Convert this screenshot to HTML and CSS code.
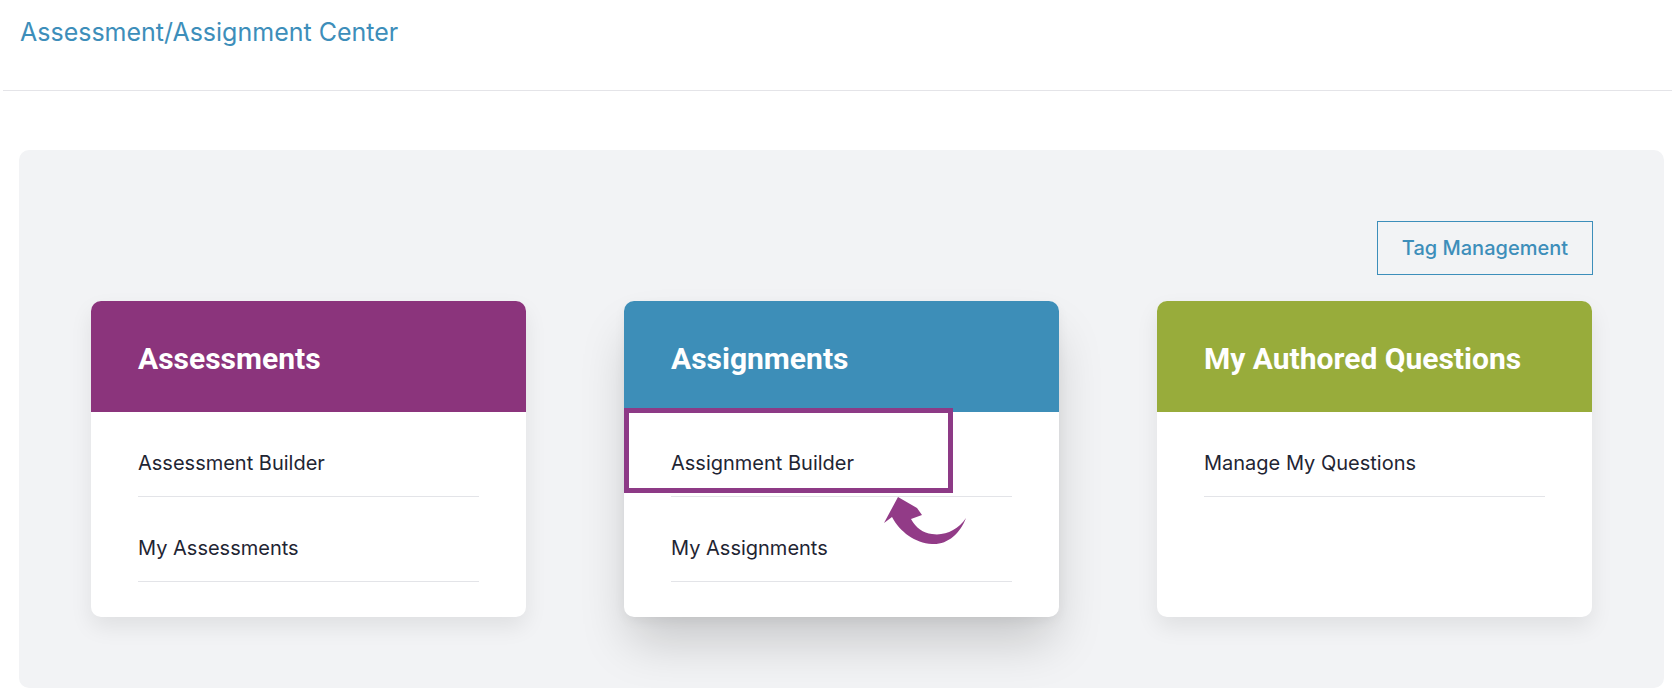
FILE: index.html
```html
<!DOCTYPE html>
<html lang="en">
<head>
<meta charset="utf-8">
<title>Assessment/Assignment Center</title>
<link rel="stylesheet" href="styles.css">
</head>
<body>
<header class="top">
  <h1 class="title">Assessment/Assignment Center</h1>
</header>
<main class="panel">
  <div class="actions">
    <button class="tag-btn" type="button">Tag Management</button>
  </div>
  <div class="cards">
    <section class="card">
      <div class="card-head head-purple"><h2>Assessments</h2></div>
      <ul class="card-list">
        <li class="item">Assessment Builder</li>
        <li class="item">My Assessments</li>
      </ul>
    </section>
    <section class="card card-hover">
      <div class="card-head head-blue"><h2>Assignments</h2></div>
      <ul class="card-list">
        <li class="item">Assignment Builder</li>
        <li class="item">My Assignments</li>
      </ul>
      <div class="highlight"></div>
      <svg class="arrow" width="95" height="62" viewBox="0 0 95 62" aria-hidden="true">
        <path d="M18,7 L4,33 L12,27 C20,42 35,53 52,54 C67,55 80,44 86,28 C78,40 65,46 52,44 C43,43 36,38 31,29 L42,25 L37,18 Z" fill="#923b87"/>
      </svg>
    </section>
    <section class="card">
      <div class="card-head head-green"><h2>My Authored Questions</h2></div>
      <ul class="card-list">
        <li class="item">Manage My Questions</li>
      </ul>
    </section>
  </div>
</main>
</body>
</html>
```
FILE: styles.css
```css
* { box-sizing: border-box; }
html, body { margin: 0; padding: 0; background: #ffffff; }
body {
  font-family: Inter, "Liberation Sans", Arial, sans-serif;
  color: #1f2533;
  overflow: hidden;
}
.top {
  height: 91px;
  margin-left: 3px;
  padding: 18px 0 0 17px;
  border-bottom: 1px solid #e4e4e8;
}
.title {
  margin: 0;
  font-size: 25px;
  line-height: 29px;
  font-weight: 400;
  color: #3d8eba;
}
.panel {
  margin: 59px 8px 0 19px;
  padding: 71px 72px 71px 72px;
  background: #f2f3f5;
  border-radius: 10px;
}
.actions {
  display: flex;
  justify-content: flex-end;
  margin-right: -1px;
  margin-bottom: 26px;
}
.tag-btn {
  height: 54px;
  padding: 0 24px;
  border: 1px solid #3d8eba;
  background: transparent;
  color: #3d8eba;
  font-family: Inter, "Liberation Sans", Arial, sans-serif;
  font-size: 20px;
  font-weight: 500;
}
.cards {
  display: grid;
  grid-template-columns: repeat(3, 435px);
  column-gap: 98px;
}
.card {
  position: relative;
  background: #ffffff;
  border-radius: 10px;
  box-shadow: 0 10px 22px rgba(0, 0, 0, 0.08);
  height: 316px;
}
.card-hover {
  box-shadow: 0 30px 50px -6px rgba(0, 0, 0, 0.18), 0 4px 12px rgba(0, 0, 0, 0.05);
}
.card-head {
  height: 111px;
  display: flex;
  align-items: center;
  padding: 3px 47px 0;
  border-radius: 10px 10px 0 0;
}
.card-head h2 {
  margin: 0;
  font-family: Roboto, "Liberation Sans", Arial, sans-serif;
  font-size: 30px;
  font-weight: 700;
  color: #ffffff;
}
.head-purple { background: #8b347c; }
.head-blue { background: #3d8eb8; }
.head-green { background: #98ac3b; }
.card-list {
  list-style: none;
  margin: 0;
  padding: 0 47px 35px;
}
.item {
  padding: 39px 0 20px;
  font-size: 20px;
  line-height: 25px;
  border-bottom: 1px solid #e3e4e8;
}
.highlight {
  position: absolute;
  left: 0;
  top: 107px;
  width: 329px;
  height: 85px;
  border: 5px solid #8d3a86;
}
.arrow {
  position: absolute;
  left: 256px;
  top: 189px;
}
```
